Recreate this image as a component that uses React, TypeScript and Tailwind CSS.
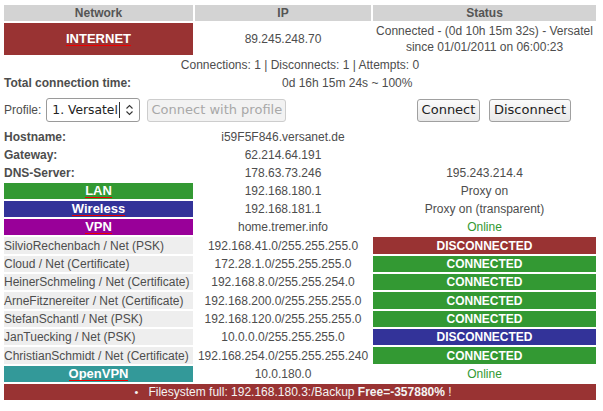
import React from "react";

const RED = "bg-[#993333]";

function NetLink({ children }: { children: React.ReactNode }) {
    return (
        <span className="inline-flex flex-col items-stretch pt-[1px] pb-[1px] font-bold text-[13px] leading-[13px] text-white">
            <span>{children}</span>
            <span className="h-px bg-[#ee0000]" />
        </span>
    );
}

const vpns = [
    { name: "SilvioRechenbach / Net (PSK)", net: "192.168.41.0/255.255.255.0", state: "DISCONNECTED", bg: "bg-[#993333]", h: "h-[17px]" },
    { name: "Cloud / Net (Certificate)", net: "172.28.1.0/255.255.255.0", state: "CONNECTED", bg: "bg-[#339933]", h: "h-4" },
    { name: "HeinerSchmeling / Net (Certificate)", net: "192.168.8.0/255.255.254.0", state: "CONNECTED", bg: "bg-[#339933]", h: "h-4" },
    { name: "ArneFitznereiter / Net (Certificate)", net: "192.168.200.0/255.255.255.0", state: "CONNECTED", bg: "bg-[#339933]", h: "h-[17px]" },
    { name: "StefanSchantl / Net (PSK)", net: "192.168.120.0/255.255.255.0", state: "CONNECTED", bg: "bg-[#339933]", h: "h-4" },
    { name: "JanTuecking / Net (PSK)", net: "10.0.0.0/255.255.255.0", state: "DISCONNECTED", bg: "bg-[#333399]", h: "h-4" },
    { name: "ChristianSchmidt / Net (Certificate)", net: "192.168.254.0/255.255.255.240", state: "CONNECTED", bg: "bg-[#339933]", h: "h-[17px]" },
];

export default function App() {
    const cell = "flex items-center justify-center whitespace-nowrap";
    const row = "h-4";

    return (
        <div className="w-[603px] h-[411px] bg-white overflow-hidden font-['Liberation_Sans',Arial,sans-serif] text-[12px] text-[#4d4d4d]">
            <div className="grid grid-cols-[189px_176px_223px] gap-[2px] pl-[4px] pt-[5px]">
                {/* Header */}
                {["Network", "IP", "Status"].map((h) => (
                    <div key={h} className={`${cell} h-4 bg-[#d3d3d3] font-bold text-[#555]`}>
                        {h}
                    </div>
                ))}

                {/* Internet */}
                <div className={`${cell} h-8 ${RED}`}>
                    <NetLink>INTERNET</NetLink>
                </div>
                <div className={`${cell} h-8`}>89.245.248.70</div>
                <div className="h-8 flex flex-col items-center justify-center leading-4 whitespace-nowrap">
                    <span>Connected - (0d 10h 15m 32s) - Versatel</span>
                    <span>since 01/01/2011 on 06:00:23</span>
                </div>

                {/* Counters */}
                <div className={`${cell} ${row} col-span-3`}>Connections: 1 | Disconnects: 1 | Attempts: 0</div>

                <div className={`${row} flex items-center font-bold`}>Total connection time:</div>
                <div className={`${row} col-span-2 flex items-center pl-[87px]`}>0d 16h 15m 24s ~ 100%</div>

                {/* Profile */}
                <div className="col-span-2 h-[34px] flex items-center">
                    <span>Profile:</span>
                    <div className="ml-[5px] w-[94px] h-[24px] flex items-center bg-white border border-[#9a9a9a] rounded-[3px] font-['DejaVu_Sans',sans-serif] text-[12.3px] text-[#222]">
                        <span className="pl-[5px] flex-1 whitespace-nowrap">1. Versatel</span>
                        <span className="w-px h-[16px] bg-[#333]" />
                        <svg width="9" height="12" viewBox="0 0 9 12" className="mx-[5px]">
                            <path d="M1.5 4.5 L4.5 1.5 L7.5 4.5 M1.5 7.5 L4.5 10.5 L7.5 7.5" fill="none" stroke="#333" strokeWidth="1.1" />
                        </svg>
                    </div>
                    <button
                        disabled
                        className="ml-[7px] w-[139px] h-[23px] flex items-center justify-center whitespace-nowrap bg-[#f2f2f2] border border-[#cdcdcd] rounded-[3px] font-['DejaVu_Sans',sans-serif] text-[13px] text-[#a8a8a8]"
                    >
                        Connect with profile
                    </button>
                </div>
                <div className="h-[34px] flex items-center pl-[44px] gap-[9px] font-['DejaVu_Sans',sans-serif] text-[13px] text-[#222]">
                    <button className="w-[63px] h-[23px] flex items-center justify-center bg-gradient-to-b from-[#fbfbfb] to-[#e8e8e8] border border-[#a0a0a0] rounded-[3px]">
                        Connect
                    </button>
                    <button className="w-[82px] h-[23px] flex items-center justify-center bg-gradient-to-b from-[#fbfbfb] to-[#e8e8e8] border border-[#a0a0a0] rounded-[3px]">
                        Disconnect
                    </button>
                </div>

                {/* Host info */}
                <div className={`${row} flex items-center font-bold`}>Hostname:</div>
                <div className={`${cell} ${row}`}>i59F5F846.versanet.de</div>
                <div className={row} />

                <div className={`${row} flex items-center font-bold`}>Gateway:</div>
                <div className={`${cell} ${row}`}>62.214.64.191</div>
                <div className={row} />

                <div className={`${row} flex items-center font-bold`}>DNS-Server:</div>
                <div className={`${cell} ${row}`}>178.63.73.246</div>
                <div className={`${cell} ${row}`}>195.243.214.4</div>

                {/* Interfaces */}
                <div className={`${cell} ${row} bg-[#339933]`}>
                    <NetLink>LAN</NetLink>
                </div>
                <div className={`${cell} ${row}`}>192.168.180.1</div>
                <div className={`${cell} ${row}`}>Proxy on</div>

                <div className={`${cell} ${row} bg-[#333399]`}>
                    <NetLink>Wireless</NetLink>
                </div>
                <div className={`${cell} ${row}`}>192.168.181.1</div>
                <div className={`${cell} ${row}`}>Proxy on (transparent)</div>

                <div className={`${cell} ${row} bg-[#990099]`}>
                    <NetLink>VPN</NetLink>
                </div>
                <div className={`${cell} ${row}`}>home.tremer.info</div>
                <div className={`${cell} ${row} text-[#339933]`}>Online</div>

                {/* VPN tunnels */}
                {vpns.map((v) => (
                    <React.Fragment key={v.name}>
                        <div className={`${v.h} flex items-center whitespace-nowrap bg-[#eeeeee]`}>{v.name}</div>
                        <div className={`${cell} ${v.h}`}>{v.net}</div>
                        <div className={`${cell} ${v.h} ${v.bg} font-bold text-white`}>{v.state}</div>
                    </React.Fragment>
                ))}

                <div className={`${cell} ${row} bg-[#339999]`}>
                    <NetLink>OpenVPN</NetLink>
                </div>
                <div className={`${cell} ${row}`}>10.0.180.0</div>
                <div className={`${cell} ${row} text-[#339933]`}>Online</div>

                {/* Warning */}
                <div className={`${cell} ${row} col-span-3 ${RED} text-[#f4f4f4]`}>
                    <span className="inline-block w-[14px] text-[11px]">•</span>
                    <span>
                        Filesystem full: 192.168.180.3:/Backup <b>Free=-357880%</b> !
                    </span>
                    <span className="inline-block w-[14px]" />
                </div>
            </div>
        </div>
    );
}
